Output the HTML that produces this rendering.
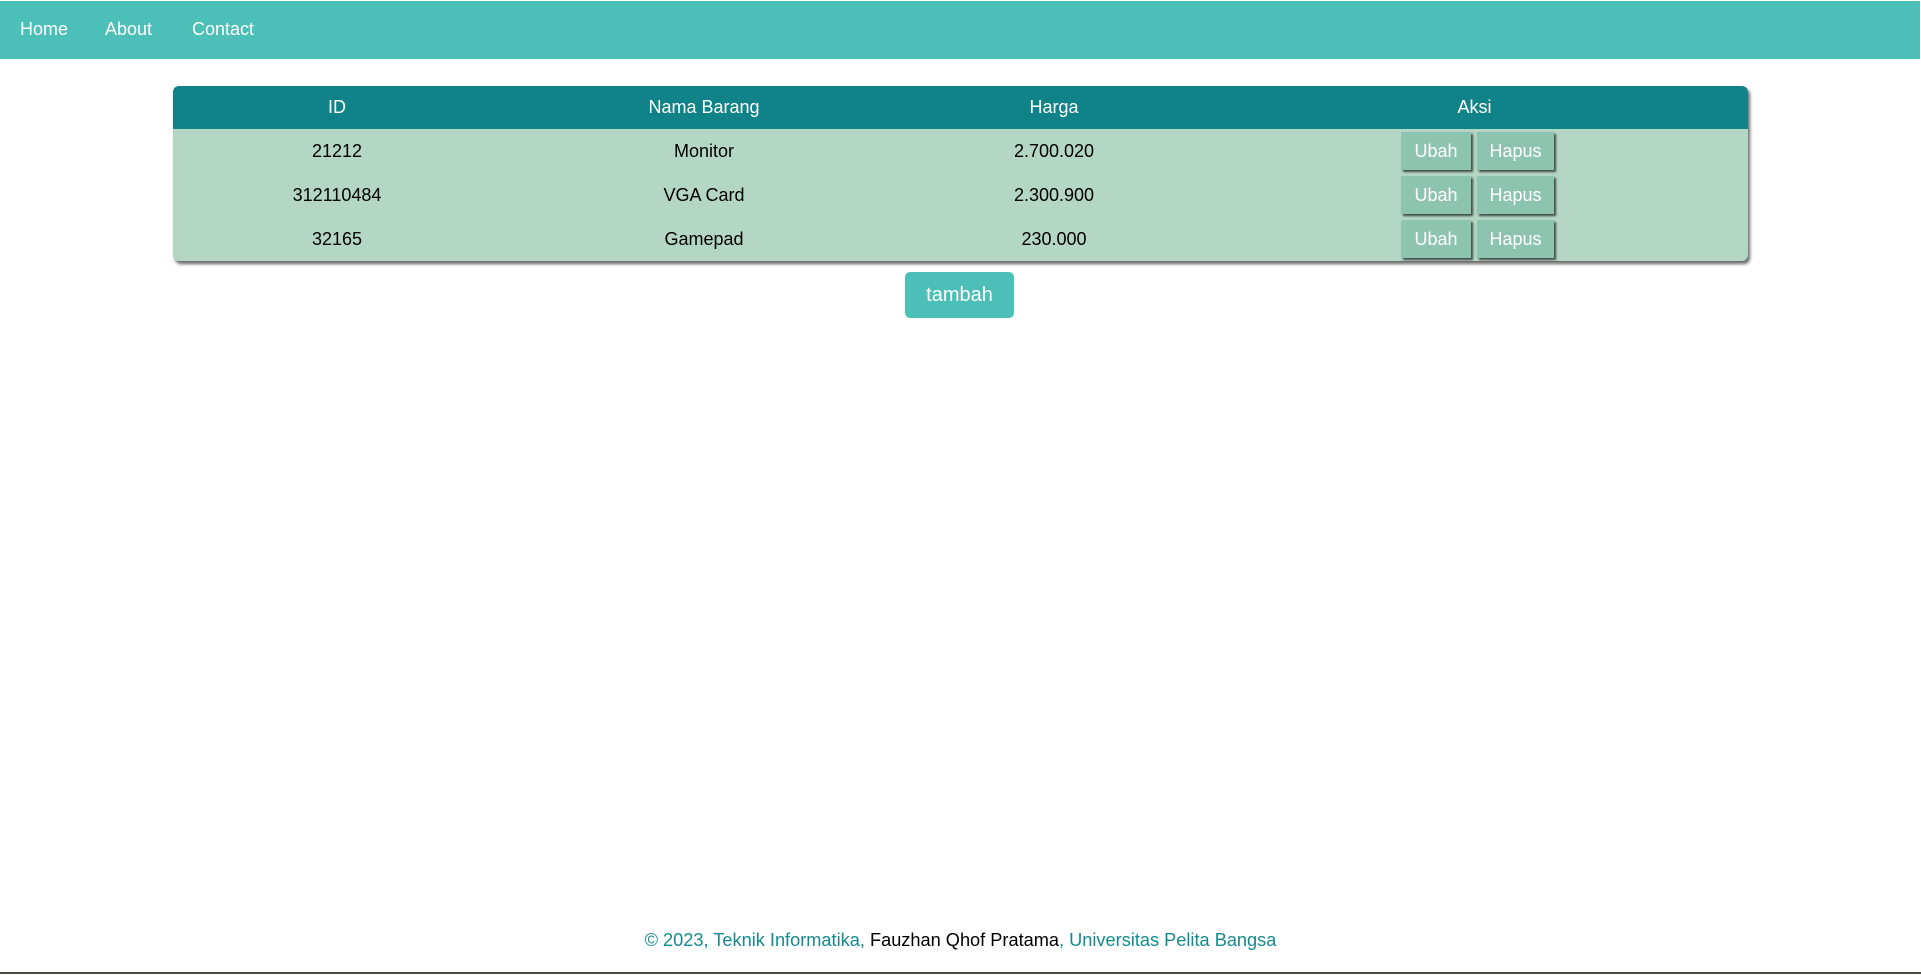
<!DOCTYPE html>
<html><head><meta charset="utf-8"><style>
html,body{margin:0;padding:0;width:1921px;height:975px;background:#fff;font-family:"Liberation Sans",sans-serif;overflow:hidden;position:relative}
.nav{position:absolute;left:0;top:1px;width:1920px;height:58px;background:#4cbfb8}
.nav a{position:absolute;top:18px;color:#fff;font-size:18px;text-decoration:none}
.tbl{position:absolute;left:173px;top:86px;width:1575px;height:175px;border-radius:6px;background:#b4d6c5;box-shadow:2px 3px 3px rgba(0,0,0,.6);overflow:hidden}
.hd{height:43px;background:#108388;color:#fff;position:relative}
.row{height:44px;position:relative}
.c{position:absolute;top:0;height:100%;display:flex;align-items:center;justify-content:center;font-size:18px}
.c1{left:0;width:328px}.c2{left:328px;width:406px}.c3{left:734px;width:294px}.c4{left:1031px;width:547px}
.hd .c4{left:1028px}
.row .c{color:#000}
.b{display:inline-block;background:#8dc4b0;color:#fff;height:38px;line-height:38px;font-size:18px;box-shadow:2px 2px 2px rgba(0,0,0,.65);margin:0 3px;text-align:center}
.u{width:70px}.h{width:77px}
.add{position:absolute;left:905px;top:272px;width:109px;height:46px;border-radius:5px;background:#4cbfb8;color:#fff;font-size:20px;line-height:46px;text-align:center}
.ft{position:absolute;left:0;width:1921px;top:930px;text-align:center;font-size:18.2px;color:#138a8f}
.ft span{color:#000}
.line{position:absolute;left:0;top:972px;width:1921px;height:2px;background:#4d4d3a}
</style></head><body>
<div class="nav"><a style="left:20px">Home</a><a style="left:105px">About</a><a style="left:192px">Contact</a></div>
<div class="tbl">
<div class="hd"><div class="c c1">ID</div><div class="c c2">Nama Barang</div><div class="c c3">Harga</div><div class="c c4">Aksi</div></div>
<div class="row"><div class="c c1">21212</div><div class="c c2">Monitor</div><div class="c c3">2.700.020</div><div class="c c4"><span class="b u">Ubah</span><span class="b h">Hapus</span></div></div>
<div class="row"><div class="c c1">312110484</div><div class="c c2">VGA Card</div><div class="c c3">2.300.900</div><div class="c c4"><span class="b u">Ubah</span><span class="b h">Hapus</span></div></div>
<div class="row"><div class="c c1">32165</div><div class="c c2">Gamepad</div><div class="c c3">230.000</div><div class="c c4"><span class="b u">Ubah</span><span class="b h">Hapus</span></div></div>
</div>
<div class="add">tambah</div>
<div class="ft">© 2023, Teknik Informatika, <span>Fauzhan Qhof Pratama</span>, Universitas Pelita Bangsa</div>
<div class="line"></div>
</body></html>
